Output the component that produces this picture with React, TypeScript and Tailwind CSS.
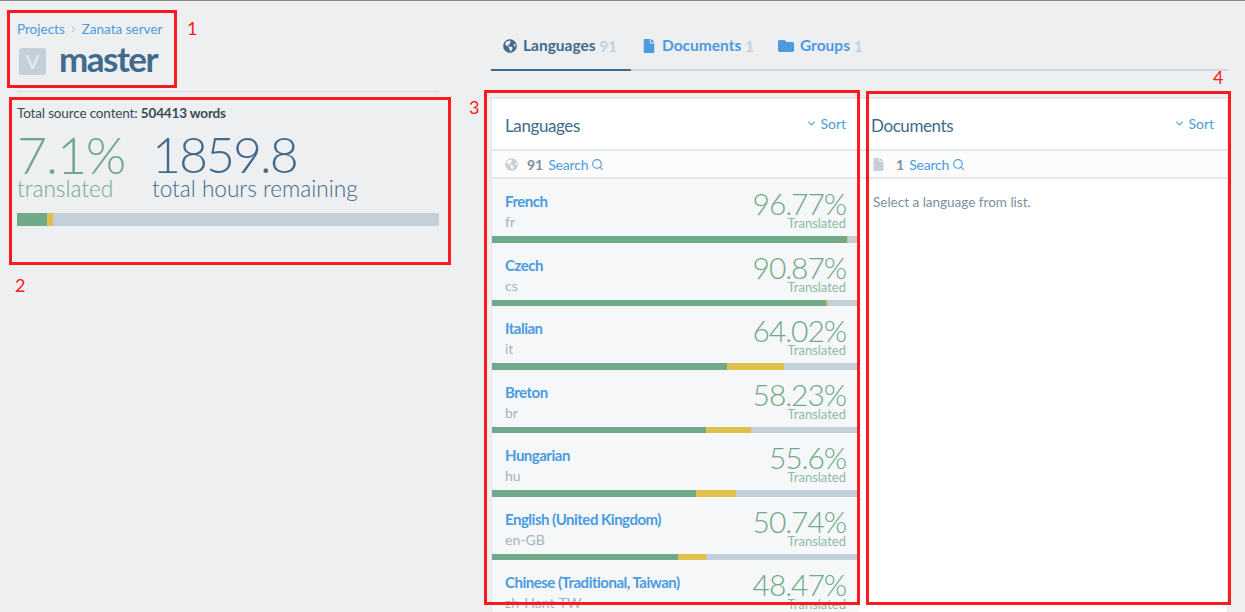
import React from "react";
import { FaGlobeAmericas, FaFile, FaFolder } from "react-icons/fa";
import { ChevronDown, ChevronRight, Search } from "lucide-react";

const rows = [
  { name: "French", code: "fr", pct: "96.77%", g: 355, y: 1 },
  { name: "Czech", code: "cs", pct: "90.87%", g: 334, y: 2 },
  { name: "Italian", code: "it", pct: "64.02%", g: 235, y: 57 },
  { name: "Breton", code: "br", pct: "58.23%", g: 214, y: 45 },
  { name: "Hungarian", code: "hu", pct: "55.6%", g: 204, y: 40 },
  { name: "English (United Kingdom)", code: "en-GB", pct: "50.74%", g: 186, y: 28 },
  { name: "Chinese (Traditional, Taiwan)", code: "zh-Hant-TW", pct: "48.47%", g: 170, y: 30 },
];

function Row({ r }: { r: (typeof rows)[number] }) {
  return (
    <div className="h-[63.5px] shrink-0 flex flex-col bg-[#f5f7f9]">
      <div className="flex-1 flex justify-between pl-[13px] pr-[13px] pt-[12px]">
        <div>
          <div className="text-[15px] leading-[20px] font-bold tracking-[-0.5px] text-[#4a9be0]">{r.name}</div>
          <div className="text-[14px] leading-[20px] mt-[1px] text-[#a5b3c1]">{r.code}</div>
        </div>
        <div className="text-right -mt-[1px]">
          <div className="text-[30px] leading-[26px] font-light tracking-[-1.1px] text-[#70a98a]">{r.pct}</div>
          <div className="text-[13px] leading-[13px] mt-[1px] text-[#8ebba3]">Translated</div>
        </div>
      </div>
      <div className="h-[6.5px] flex bg-[#c3cfd9] shrink-0">
        <div className="bg-[#70a98a]" style={{ width: r.g }} />
        <div className="bg-[#e0c04d]" style={{ width: r.y }} />
      </div>
    </div>
  );
}

function PanelHead({ title, pad }: { title: string; pad: string }) {
  return (
    <div className={`h-[52px] shrink-0 flex items-center justify-between border-b-2 border-[#e3e7eb] bg-white pr-[13px] ${pad}`}>
      <span className="text-[17px] tracking-[-0.4px] text-[#416a8c] pt-[4px]">{title}</span>
      <span className="flex items-center gap-[3px] text-[14px] text-[#4a9be0] -mt-[1px]">
        <ChevronDown size={11} strokeWidth={2.5} />
        Sort
      </span>
    </div>
  );
}

function SubHead({ icon, count, iconW }: { icon: React.ReactNode; count: string; iconW: string }) {
  return (
    <div className="h-[28px] shrink-0 flex items-center border-b-2 border-[#e3e7eb] bg-[#fcfcfd] text-[14px] pl-[13px]">
      <span className={`flex text-[#c3cfd9] ${iconW}`}>{icon}</span>
      <span className="font-bold text-[#7c8fa1] mr-[5px]">{count}</span>
      <span className="text-[#4a9be0] tracking-[-0.2px]">Search</span>
      <Search size={13} strokeWidth={2} className="ml-[3px] text-[#4a9be0]" />
    </div>
  );
}

function Tab({ icon, label, count, active }: { icon: React.ReactNode; label: string; count: string; active?: boolean }) {
  return (
    <div className={`flex items-center h-[48px] -mb-[2px] border-b-[2px] ${active ? "border-[#416a8c] w-[140px] pl-[12px]" : "border-transparent mr-[13px] ml-[11px]"} `}>
      <span className={`mr-[6px] flex ${active ? "text-[#416a8c]" : "text-[#4a9be0]"}`}>{icon}</span>
      <span className={`text-[15.5px] font-bold ${active ? "text-[#416a8c]" : "text-[#4a9be0]"}`}>{label}</span>
      <span className="text-[15px] font-bold text-[#c3cfd9] ml-[4px]">{count}</span>
    </div>
  );
}

function Mark({ cls, n, ncls }: { cls: string; n: string; ncls: string }) {
  return (
    <>
      <div className={`absolute border-[3px] border-[#fb1a1f] pointer-events-none ${cls}`} />
      <div className={`absolute text-[18px] leading-[20px] text-[#fb1a1f] ${ncls}`}>{n}</div>
    </>
  );
}

export default function App() {
  return (
    <div className="relative w-[1245px] h-[612px] overflow-hidden bg-[#edeff1] border-t border-[#8a8a8a] flex font-['Lato','Liberation_Sans',sans-serif]">
      <div className="w-[491px] shrink-0 pl-[17px] pr-[52px]">
        <div className="pt-[19px] flex items-center text-[13.5px] leading-[18px] text-[#4a9be0]">
          Projects
          <ChevronRight size={9} className="mx-[4px] text-[#8aa0b4]" />
          Zanata server
        </div>
        <div className="flex items-center h-[44px] mt-[1px] pl-[2px]">
          <span className="w-[27px] h-[27px] rounded-[3px] bg-[#c3cfd9] text-[#e6ebef] text-[20px] flex items-center justify-center">V</span>
          <span className="ml-[13px] mb-[6px] text-[35px] leading-[40px] font-bold tracking-[-1.5px] text-[#416a8c]">master</span>
        </div>
        <div className="mt-[8px] h-[1px] bg-[#d9dde1]" />
        <div className="mt-[12px] text-[13.5px] leading-[18px] tracking-[-0.15px] text-[#3c4a57]">
          Total source content: <b>504413 words</b>
        </div>
        <div className="flex mt-[6px]">
          <div className="w-[135px]">
            <div className="text-[52px] leading-[52px] font-light tracking-[-1.2px] text-[#70a98a]">7.1%</div>
            <div className="text-[22.6px] leading-[24px] font-light text-[#70a98a] -mt-[3px]">translated</div>
          </div>
          <div>
            <div className="text-[50px] leading-[52px] font-light tracking-[-2px] text-[#416a8c]">1859.8</div>
            <div className="text-[22.6px] leading-[24px] font-light text-[#416a8c] -mt-[3px]">total hours remaining</div>
          </div>
        </div>
        <div className="mt-[12px] h-[13px] flex bg-[#c3cfd9]">
          <div className="w-[30px] bg-[#70a98a]" />
          <div className="w-[6px] bg-[#e0c04d]" />
        </div>
      </div>
      <div className="flex-1 pr-[17px] flex flex-col min-w-0">
        <div className="mt-[22px] flex border-b-[2px] border-[#d2d9df] shrink-0">
          <Tab active icon={<FaGlobeAmericas size={14} />} label="Languages" count="91" />
          <Tab icon={<FaFile size={14} />} label="Documents" count="1" />
          <Tab icon={<FaFolder size={16} />} label="Groups" count="1" />
        </div>
        <div className="mt-[26px] flex-1 flex min-h-0 bg-white border-x border-t-2 border-[#e3e7eb]">
          <div className="w-[367px] shrink-0 flex flex-col overflow-hidden">
            <PanelHead title="Languages" pad="pl-[13px]" />
            <SubHead icon={<FaGlobeAmericas size={13} />} count="91" iconW="w-[22px]" />
            {rows.map((r) => (
              <Row key={r.code} r={r} />
            ))}
          </div>
          <div className="flex-1 min-w-0 flex flex-col">
            <PanelHead title="Documents" pad="pl-[12px]" />
            <SubHead icon={<FaFile size={13} />} count="1" iconW="w-[24px]" />
            <div className="pl-[14px] pt-[14px] text-[13.5px] leading-[18px] text-[#7c8fa1]">Select a language from list.</div>
          </div>
        </div>
      </div>
      <Mark cls="left-[7px] top-[9px] w-[170px] h-[78px]" n="1" ncls="left-[187px] top-[17px]" />
      <Mark cls="left-[9px] top-[96px] w-[442px] h-[168px]" n="2" ncls="left-[15px] top-[274px]" />
      <Mark cls="left-[484px] top-[89px] w-[376px] h-[515px]" n="3" ncls="left-[469px] top-[96px]" />
      <Mark cls="left-[866px] top-[90px] w-[365px] h-[514px]" n="4" ncls="left-[1213px] top-[66px]" />
    </div>
  );
}
